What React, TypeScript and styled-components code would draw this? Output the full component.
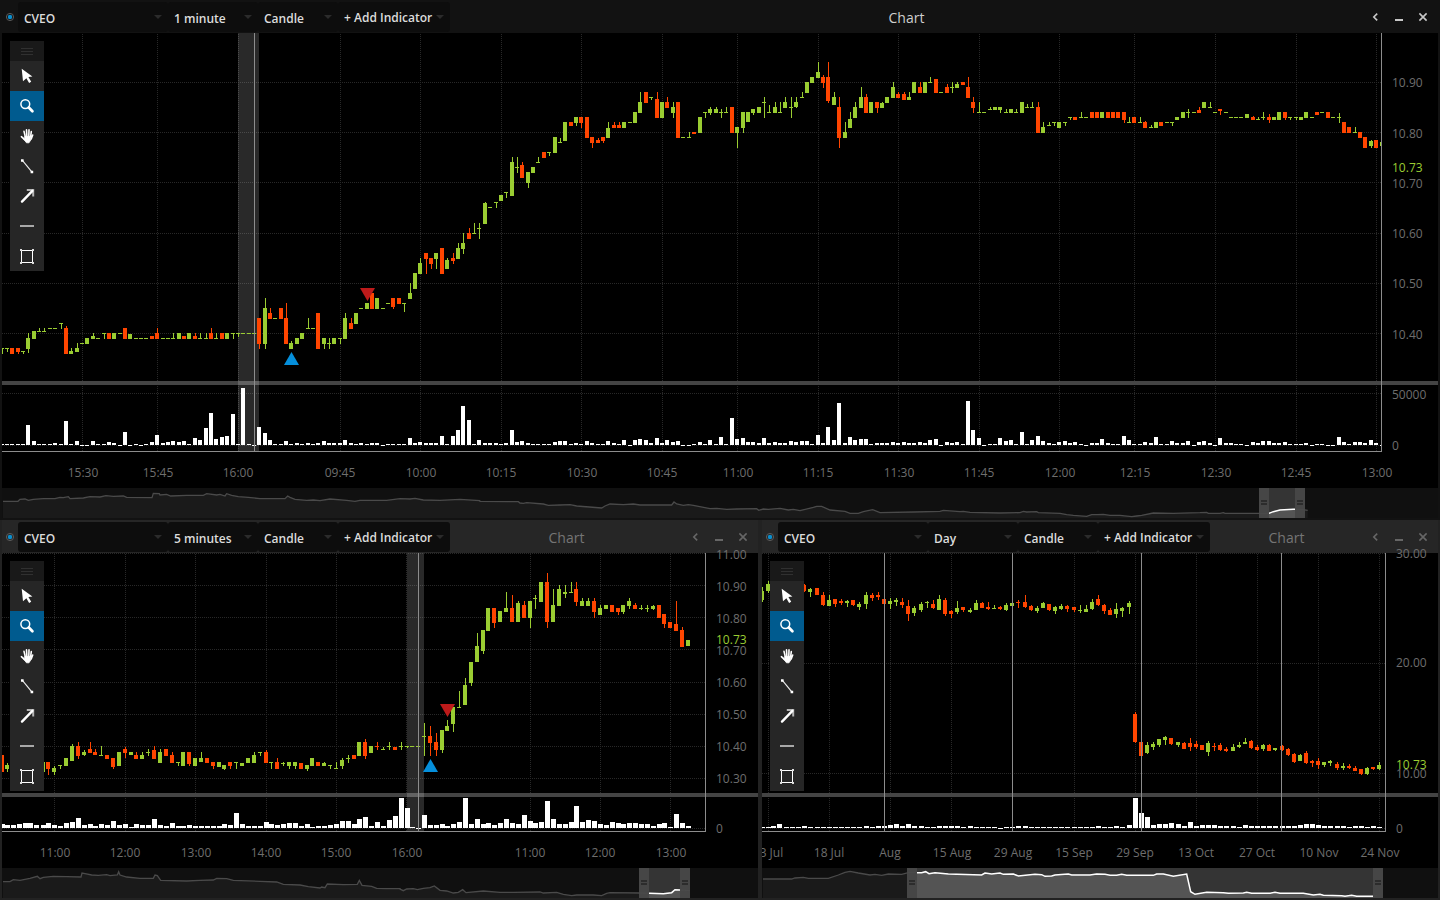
import React from 'react';
import styled, { createGlobalStyle } from 'styled-components';

/* ---------- data ---------- */

type Candle = { x: number; up: boolean; vol: number; top: number; bottom: number; high: number; low: number };
type Point = [number, number];
type Tick = { at: number; label: string; hot?: boolean };

const UNIT = 3;

// Each entry: direction + x, volume, body top, body bottom [, high, low]
const readCandles = (ox: number, oy: number, feed: string): Candle[] =>
  feed
    .trim()
    .split(/\s+/)
    .map((entry) => {
      const n = entry.slice(1).split(',').map(Number);
      const y = (v: number) => oy + Math.round(v / UNIT);
      return {
        x: ox + Math.round(n[0] / UNIT - 2) + 2,
        up: entry[0] === 'u',
        vol: n[1],
        top: y(n[2]),
        bottom: y(n[3]),
        high: y(n[4] ?? n[2]),
        low: y(n[5] ?? n[3]),
      };
    });

const readPoints = (ox: number, oy: number, feed: string): Point[] =>
  feed
    .trim()
    .split(/\s+/)
    .map((p) => {
      const [x, y] = p.split(',').map(Number);
      return [ox + x / UNIT, oy + y / UNIT] as Point;
    });

const minuteCandles = [
  ...readCandles(0, 280, `
    u7,1,204,207,204,221 u21,1,204,207,204,216 d36,1,204,221 d54,1,204,216,204,221 u69,1,213,216,213,221
    u84,20,174,207,159,219 u102,4,153,177 u118,1,153,156,144,156 u133,1,153,156,144,156 u150,1,144,147
    u165,2,144,147 u183,1,129,132,129,147 d198,24,144,221,138,221 u213,1,213,221,204,221 u231,4,204,216,189,216
    u246,0,189,192 u261,0,174,192 u280,4,168,177,159,177 u294,1,174,177 u312,1,159,162,159,177 d327,3,159,177
    u342,2,159,177 u360,0,159,162 d375,13,144,177 u390,0,162,177 u408,1,174,177 u423,0,174,177 u438,1,174,177
    d456,3,168,177 d471,10,159,177,144,177 u489,2,174,177 u504,3,174,177 u519,4,174,177,159,177 u537,3,159,177
    d552,4,168,177 u567,1,159,177 d585,7,168,177,159,177 u601,5,174,177,159,177 u618,17,174,177,159,177
    d633,32,159,177,144,177 u649,6,174,177,159,177 d666,8,159,177 u681,9,159,177 u698,31,159,162,159,177
    u715,1,159,162,159,171 u729,57,159,162 u747,1,159,162 u762,0,159,162 d777,18,114,192,114,207
    u795,12,84,192,54,207 d810,5,99,117,84,117 u825,1,114,117 d843,1,84,117 d858,4,114,192,69,192
    u873,1,189,207,183,207 u891,2,174,192 u906,1,159,177 u925,2,144,147,114,147 u939,1,144,147 d954,2,99,207
    u972,4,174,192,174,207 u988,2,189,192,174,207 u1003,2,174,192 u1020,2,174,177,174,192 u1035,5,114,177,99,177
    d1053,2,129,147,114,147 u1068,1,99,132 u1083,2,84,87 u1101,1,69,87 d1116,2,39,87 u1131,2,54,87
    u1149,0,84,87 u1164,1,69,72 d1179,1,54,81,54,87 d1197,1,54,72 u1213,1,69,72,69,96 u1230,7,39,57,9,57
    u1245,2,-21,27`),
  ...readCandles(0, 0, `
    u1260,3,789,822,774,822 d1278,2,759,777,759,822 d1293,2,774,792,774,807 u1308,2,759,777,759,807 d1326,9,744,822
    u1341,1,780,807,774,807 d1359,9,774,783,759,792 u1374,15,744,777,729,777 u1389,39,729,747,699,762
    d1407,25,699,717,684,717 u1423,1,699,702,669,702 u1438,5,684,687,669,717`),
  ...readCandles(480, 60, `
    u15,2,429,492,426,492 u30,2,441,444 u48,2,426,429,426,444 u63,1,405,423 u78,2,396,399,396,414
    u96,15,306,408,291,408 u111,3,321,324,291,339 d126,4,315,354,306,354 u144,2,336,369,336,384 u159,1,321,339
    u174,1,306,309,291,309 d192,1,276,294 u207,1,276,279,276,288 u225,3,231,279 u240,4,246,249,234,249
    u255,4,186,243 d273,1,186,198 u288,2,171,189,171,198 d303,1,171,189,171,204 d321,4,171,234
    d336,2,231,249,231,264 d354,1,240,249,234,249 d369,1,231,243,231,249 u384,4,204,234,186,234
    d402,2,195,204,186,204 d417,1,195,204,186,204 u432,5,186,204 u450,0,186,189 u465,5,156,189
    u480,6,126,159,96,159 d498,5,96,129 u513,2,111,114,111,120 d531,7,117,174,96,174 u546,2,126,174
    d561,5,126,144,111,144 u579,3,141,159,126,174 d594,4,126,234 u609,0,231,234 u627,0,231,234,216,234
    d642,1,216,222 u660,3,171,219 u675,1,156,159,156,174 u690,5,147,159,141,165 u708,1,147,159,141,159
    u723,8,156,159,147,174 u738,1,156,159,141,159 d756,27,141,219 u771,6,201,219,201,264 u789,7,156,204,156,219
    u804,3,156,186 u819,3,147,159,147,165 u837,2,141,159 u852,7,126,129,111,174 u867,2,156,159,135,159
    u885,3,141,159,126,159 u900,2,156,159,126,159 u915,2,126,144,111,144 u933,4,141,144,111,174
    u948,3,126,141,111,144 u966,4,111,114,96,114 u981,4,66,99 u996,1,51,69 u1014,10,36,54,6,54
    d1029,2,51,69,45,84 d1044,18,51,123,6,129 u1062,5,111,135,96,135 d1077,42,141,234,111,264
    u1095,2,216,234,186,234 u1110,8,177,204,156,204 u1125,5,141,174,126,174 u1143,6,111,144,81,144
    d1158,6,111,159,102,159 u1173,1,126,159 d1191,2,126,144,126,159 u1206,2,129,144,126,144 u1221,2,111,129
    u1239,3,81,114,66,114 d1254,2,102,114,96,114 d1272,3,102,120,96,120 u1287,2,111,120,96,120 u1302,2,66,99
    d1320,3,81,99,66,99 u1335,2,66,99 u1350,5,66,69,51,69 d1368,6,57,99 u1383,0,96,99 d1401,3,81,99,72,99
    u1416,2,81,84,66,99 u1431,3,72,84,66,84`),
  ...readCandles(960, 0, `
    d9,1,246,255 d24,44,261,294,231,294 d39,15,306,324,291,339 u57,7,336,339,306,339 u72,0,336,339
    u90,1,327,330,321,330 u105,1,321,330 u120,7,321,330,321,339 u138,4,336,339,327,339 u153,5,327,339
    u168,1,336,339,327,339 u186,13,306,339 u201,1,321,324,312,324 u216,5,321,324,306,324 d234,9,321,399,306,399
    u249,4,381,399,366,399 u267,2,375,378,366,378 u282,1,366,369,366,378 u297,3,366,384 u315,4,366,369,366,378
    u330,2,351,354,351,360 d345,3,351,360 u363,1,351,354,336,354 u378,0,351,354 d396,2,336,354 d411,2,336,354
    u426,6,336,354 d444,2,336,354 d459,1,336,354 d474,1,336,354 d492,9,336,360,336,369 u507,5,366,369,351,369
    d522,1,351,369 u540,1,366,369,351,369 d555,3,366,384,363,384 u573,2,381,384,375,384 u588,8,366,384
    d603,1,366,378 u621,1,366,369 u636,4,366,369,366,378 u651,2,351,360 u669,2,336,354 u684,4,336,339,327,354
    u702,0,336,339 d717,3,330,339,321,339 u732,4,306,324 u750,2,321,324,306,324 u765,0,336,339
    d780,7,327,333,327,345 u798,2,336,339 u813,2,351,354 u828,1,351,354 u843,1,351,354 u861,0,342,354
    d879,3,351,360,348,360 u894,2,357,360,351,360 u909,4,351,354,336,360 d928,4,351,360,342,369 u942,2,351,360
    u957,2,336,360 d975,3,336,354,336,360 u990,1,351,354,351,360 u1008,1,351,354,351,360 u1023,1,351,360
    u1038,2,336,354 u1056,0,351,354 d1071,1,336,345 u1086,1,336,339 d1104,0,336,354 u1119,0,351,354
    u1137,8,351,354,339,369 d1152,3,366,399 d1167,1,381,399 u1185,3,396,399,381,399 d1200,3,396,414
    d1215,2,411,444 u1233,5,423,438,420,444 d1248,2,420,444 u1266,0,426,438`),
];

const fiveMinuteCandles = [
  ...readCandles(0, 515, `
    d6,4,720,771 u21,3,750,762,744,771 d40,3,744,756 u58,4,741,756 d75,5,741,756 u91,5,741,756 d109,3,744,762
    u128,3,741,771 d144,5,741,762,741,780 u162,3,759,771,753,780 u180,2,750,753,750,762 u198,5,729,753
    u216,6,693,738,687,738 d234,10,693,723,681,732 u252,3,711,720,705,723 d271,4,702,714,681,714
    d285,2,711,720,702,720 u303,4,720,723,693,723 d321,3,720,732 d339,7,729,756,729,762 u357,3,711,753
    d375,4,702,714,696,729 u393,1,711,720 d409,4,720,732,711,732 u426,3,720,732,711,732 u444,3,711,714,702,723
    d462,9,705,732,693,732 u480,3,711,744,702,744 d498,2,702,723 d516,5,720,744,711,744 u535,2,741,744,741,753
    u549,2,711,753 d567,3,711,747,711,753 u585,2,729,753 u603,2,729,741,711,741 d621,2,729,744
    d639,2,741,753,741,762 u657,2,741,756 u673,4,750,762,750,765 d690,3,741,753,741,762 u709,15,741,744,741,762
    u726,4,744,753 u744,2,729,744 u762,2,720,744,711,744 u780,2,711,714,711,723 d798,6,711,744,705,744
    u814,4,741,744,741,762 d831,3,741,762,729,762 u849,4,744,747,741,753 u867,5,741,753,741,762
    u885,5,741,753,741,762 d903,2,744,762 u921,4,750,762,750,768 u936,1,729,753 d954,2,741,753
    u972,2,744,753,741,753 u990,3,750,753,750,762 u1008,4,759,762,741,762 u1026,7,735,753,729,762
    u1045,7,729,732,720,744 d1062,4,720,732 u1077,9,681,723 d1096,11,681,723,672,732 u1113,2,693,714
    d1132,6,693,696,681,705 u1149,2,702,705,696,705 u1167,8,693,696,681,705 d1185,12,696,705`),
  ...readCandles(380, 515, `
    u62,30,693,696,681,705 u80,20,693,696,693,699 u97,1,693,696 u115,0,693,696 u132,13,663,666,624,723
    d151,3,663,684,633,723 d168,3,681,705,654,723 u186,4,645,705,645,714 u202,2,633,648,615,648
    u219,4,576,627,576,651 u237,6,576,579,528,579 u255,30,510,570,489,570 u273,4,441,504,441,513
    u291,9,393,441,354,441 u309,4,345,408,345,417 u324,5,279,348 d342,3,279,324,279,339 u360,5,288,321
    u378,9,279,291,231,291 d396,5,279,321,240,321 u414,4,264,321,258,321 d432,13,270,309,258,309
    u450,7,258,309,258,339 u466,5,249,252,240,282 u483,6,201,261 d501,27,201,321,174,339 u519,9,270,321,222,321
    u537,4,222,273,210,273 u555,4,231,237,210,249 u573,6,231,234,201,234 d588,22,222,261,201,273
    u606,6,258,273,249,273 u624,8,258,273,249,273 d642,7,258,291,249,309 u660,4,279,300,270,300 u678,3,270,282
    d696,6,270,291 d714,5,279,291,279,300 u729,4,270,291,270,297 u747,5,258,273,249,282 d765,5,270,282,264,282
    u783,4,279,282,270,285 u802,4,279,282,270,291 u819,2,273,282,270,285 d837,4,270,309 d852,5,297,327,297,339
    d870,1,321,339 d888,14,327,348,258,348 d906,5,345,396,336,396 u924,2,375,393`),
];

const dailyCandles = [
  ...readCandles(755, 515, `
    u22,1,228,255,216,261 u39,1,207,228,198,234 u55,2,200,225 d73,4,198,222 u93,1,198,225 d111,1,195,219
    u129,1,204,222 d148,2,210,228,207,231 u165,1,222,231,219,246 d186,1,219,240 d204,1,240,270,231,273
    u222,1,255,273,240,273 d240,1,252,267,252,276 d258,1,258,264,252,270 u277,1,258,264,255,276
    d294,1,255,270,255,273 u312,1,267,276,261,285 u333,2,240,267,231,282 d351,1,240,249,234,258
    d369,2,240,246,231,255 d387,2,252,267,252,282 u405,3,258,267,249,282 u424,4,255,261,249,273
    d441,2,261,270,249,279 d460,4,273,297,255,318 u477,2,279,294,273,303 u498,2,267,285,261,291
    u516,1,261,264,258,279 d534,1,267,279,255,282 u552,2,252,285,240,285 d570,2,255,297,249,303
    d588,2,288,297,285,309 u606,2,279,291,258,297 d624,1,276,285,276,291 u645,2,285,291,279,294
    u663,1,264,285,255,285 d681,1,264,279,261,279 d699,1,276,282,261,285 u717,1,279,282,270,282
    d736,0,276,282,273,285 u753,1,270,285,264,288 u771,1,264,273,255,282 d790,2,261,264,255,279
    d810,2,261,276,240,279 d828,1,273,285,270,288 u846,1,279,288,273,294 u864,1,264,279,261,279
    d882,1,267,285,267,288 u900,1,276,288,273,297 u919,1,273,282,267,285 d936,1,273,282,270,291
    d957,1,276,285,276,291 u975,1,285,288,270,294 u993,1,282,291,270,291 u1011,1,261,282,252,285
    d1029,2,252,270,240,273 d1047,1,270,288,267,297`),
  ...readCandles(1090, 515, `
    d60,1,285,300,279,300 u78,2,282,297,264,309 u96,1,279,288,276,306 u117,3,264,276,258,297
    d134,30,597,681,591,684 d153,15,681,723,666,723 u171,11,690,714,681,717 u189,3,687,696,681,705
    u207,4,672,690,672,696 u225,4,666,675,663,690 d243,5,669,687,669,690 u264,4,681,690,681,696
    d282,2,684,702,681,702 d300,6,684,696,669,708 d319,2,687,696,678,702 d336,3,690,705 u354,3,684,711,678,723
    d373,3,693,696,684,708 d390,2,690,705,684,708 d408,2,702,708,696,711 u429,2,696,708,687,708
    u447,1,690,696,681,699 u465,3,681,687,669,687 d483,2,678,699,675,702 d501,2,696,705,690,708
    u519,2,690,702,687,708 d537,2,690,708,687,708 u555,2,699,705,699,708 d576,2,693,705,690,708
    d594,2,702,720,699,723 d612,2,717,741,714,744 u630,3,720,738,717,738 d648,4,714,744,708,747
    d666,4,738,744,735,756 d684,3,738,750,729,762 u702,2,741,750,741,756 u720,2,738,744,735,753
    d741,2,747,759,741,765 u760,2,753,759,744,765 d777,1,753,759,747,762 d795,2,759,768,753,768
    d813,2,762,777,762,780 u831,1,759,777,756,780 d849,2,756,762,756,765 u867,1,750,762,741,765`),
];

const minuteHistory = [
  ...readPoints(0, 280, `9,664 54,664 60,658 75,657 85,661 100,658 130,656 165,656 180,652 190,653 205,650 210,656 250,654
    270,650 300,651 318,647 340,649 370,648 380,652 456,653 460,640 478,641 480,645 500,643 512,648 560,646 610,646
    620,641 650,645 660,643 675,648 680,641 695,646 715,650 745,652 780,656 855,656 863,648 870,652 885,658 920,661
    940,660 960,662 990,657 1040,661 1065,664 1080,661 1160,661 1200,656 1230,657 1245,655 1270,660 1320,661
    1380,658 1439,662`),
  ...readPoints(480, 370, `0,394 115,395 120,399 130,400 140,398 190,402 205,406 240,405 270,404 290,408 365,414 375,408 390,402
    430,404 460,402 480,405 575,405 582,396 590,402 610,406 625,404 640,406 690,416 710,415 740,418 770,417 830,416
    836,421 850,417 865,418 900,415 925,420 940,418 960,422 1000,412 1010,409 1025,409 1050,420 1095,424 1110,430
    1135,430 1150,425 1178,419 1200,428 1300,426 1380,424 1390,421 1440,425`),
  ...readPoints(960, 370, `10,424 30,427 120,429 180,428 190,424 200,426 230,425 235,428 300,430 320,434 340,436 380,439 395,434
    410,434 430,433 450,436 480,436 515,440 530,438 545,436 580,429 640,430 720,428 740,427 745,430 780,430 790,428
    795,430 897,430 927,430 940,425 960,420 1000,418 1025,418 1043,421`),
];

const fiveMinuteHistory = [
  ...readPoints(0, 515, `9,1100 30,1100 40,1094 60,1096 90,1090 112,1084 120,1091 130,1087 160,1084 200,1085 243,1086 246,1074
    255,1076 275,1080 295,1081 320,1079 330,1082 352,1080 356,1070 360,1080 380,1086 420,1090 460,1090 465,1080
    472,1082 482,1096 560,1098 600,1096 640,1095 650,1090 680,1091 700,1096 780,1099 830,1101 850,1108 900,1110
    925,1115 960,1119 965,1116 975,1118 982,1107 1030,1109 1072,1108 1078,1096 1086,1111 1115,1114 1130,1120 1160,1121
    1200,1121`),
  ...readPoints(380, 515, `60,1122 70,1127 80,1122 100,1121 112,1124 130,1120 150,1118 163,1113 180,1126 200,1128 220,1134 235,1132
    248,1124 258,1133 310,1128 360,1132 400,1132 480,1131 490,1134 530,1132 550,1138 575,1142 590,1140 640,1140
    665,1142 680,1135 690,1133 780,1134 850,1136 875,1133 885,1124 930,1127`),
];

const dailyHistory = [
  ...readPoints(755, 515, `24,1092 110,1092 120,1089 145,1087 160,1090 220,1090 250,1080 270,1072 285,1069 310,1074 345,1080
    360,1078 380,1081 400,1077 440,1078 460,1073 500,1073 512,1070 522,1076 540,1073 580,1077 680,1080 690,1074
    710,1077 735,1074 745,1078 775,1077 790,1083 840,1078 860,1079 870,1084 890,1083 900,1080 940,1077 950,1080
    1005,1080 1025,1077`),
  ...readPoints(1090, 515, `45,1078 60,1081 80,1081 95,1078 110,1081 190,1081 200,1077 220,1077 250,1084 290,1077 302,1130 315,1138
    350,1132 400,1133 415,1135 460,1134 470,1132 485,1135 540,1135 555,1132 570,1135 640,1135 670,1140 690,1138
    700,1141 755,1142 765,1144 785,1141 800,1144 850,1144 862,1140`),
];

interface ChartSpec {
  id: string;
  active: boolean;
  interval: string;
  // plot origin, size, and the lines inside it, in chart space
  left: number;
  top: number;
  width: number;
  height: number;
  axisWidth: number;
  split: number;
  base: number;
  barWidth: number;
  candles: Candle[];
  columns: number[];
  rows: number[];
  sessions: number[];
  closed?: [number, number];
  buy?: Point;
  sell?: Point;
  prices: Tick[];
  times: Tick[];
  history: Point[];
  overviewTop: number;
  overviewWidth: number;
  range: [number, number];
}

const ticks = (text: string): Tick[] =>
  text.split('|').map((t) => {
    const [at, label, hot] = t.split('=');
    return { at: Number(at), label, hot: hot === 'hot' };
  });

const charts: ChartSpec[] = [
  {
    id: 'minute', active: true, interval: '1 minute',
    left: 2, top: 33, width: 1380, height: 419, axisWidth: 56, split: 381, base: 445, barWidth: 4,
    candles: minuteCandles,
    columns: [82, 157, 238, 340, 420, 501, 581, 662, 737, 818, 898, 979, 1059, 1134, 1215, 1296, 1376],
    rows: [82, 132, 182, 233, 283, 333, 393, 445],
    sessions: [254], closed: [238, 259], buy: [291, 352], sell: [367, 301],
    prices: ticks('82=10.90|133=10.80|167=10.73=hot|183=10.70|233=10.60|283=10.50|334=10.40|394=50000|445=0'),
    times: ticks('83=15:30|158=15:45|238=16:00|340=09:45|421=10:00|501=10:15|582=10:30|662=10:45|738=11:00|818=11:15|899=11:30|979=11:45|1060=12:00|1135=12:15|1216=12:30|1296=12:45|1377=13:00'),
    history: minuteHistory, overviewTop: 488, overviewWidth: 1436, range: [1259, 1305],
  },
  {
    id: 'five', active: false, interval: '5 minutes',
    left: 2, top: 553, width: 704, height: 279, axisWidth: 52, split: 793, base: 828, barWidth: 5,
    candles: fiveMinuteCandles,
    columns: [54, 125, 195, 266, 336, 406, 530, 600, 670],
    rows: [553, 585, 617, 649, 682, 714, 746, 778, 828],
    sessions: [418], closed: [407, 424], buy: [430, 759], sell: [447, 717],
    prices: ticks('554=11.00|586=10.90|618=10.80|639=10.73=hot|650=10.70|682=10.60|714=10.50|746=10.40|778=10.30|828=0'),
    times: ticks('55=11:00|125=12:00|196=13:00|266=14:00|336=15:00|407=16:00|530=11:00|600=12:00|671=13:00'),
    history: fiveMinuteHistory, overviewTop: 868, overviewWidth: 756, range: [639, 690],
  },
  {
    id: 'daily', active: false, interval: 'Day',
    left: 762, top: 553, width: 624, height: 279, axisWidth: 52, split: 793, base: 828, barWidth: 5,
    candles: dailyCandles,
    columns: [768, 829, 890, 951, 1074, 1135, 1196, 1257, 1318, 1379],
    rows: [553, 663, 773, 828],
    sessions: [884, 1012, 1141, 1281],
    prices: ticks('553=30.00|663=20.00|764=10.73=hot|773=10.00|828=0'),
    times: ticks('768=03 Jul|829=18 Jul|890=Aug|952=15 Aug|1013=29 Aug|1074=15 Sep|1135=29 Sep|1196=13 Oct|1257=27 Oct|1319=10 Nov|1380=24 Nov'),
    history: dailyHistory, overviewTop: 868, overviewWidth: 676, range: [907, 1383],
  },
];

/* ---------- styles ---------- */

const FONT = "'Open Sans', 'Noto Sans', sans-serif";

const GlobalStyle = createGlobalStyle`
  *, *::before, *::after { box-sizing: border-box; }
  body { margin: 0; background: #161616; font-family: ${FONT}; }
  button, select { font: inherit; color: inherit; border: 0; margin: 0; padding: 0; background: none; }
`;

const Desk = styled.main`
  display: grid;
  grid-template-rows: 26fr 19fr;
  min-height: 100vh;
`;

const LowerRow = styled.div`
  display: grid;
  grid-template-columns: 19fr 17fr;
`;

const Frame = styled.section<{ $active: boolean }>`
  display: flex;
  flex-direction: column;
  min-width: 0;
  overflow: hidden;
  border: 2px solid ${(p) => (p.$active ? '#121212' : '#222222')};
  border-top: 0;
`;

const Header = styled.header<{ $active: boolean }>`
  display: flex;
  height: 33px;
  padding: 2px 3px 1px 0;
  background: ${(p) => (p.$active ? '#121212' : '#262626')};
`;

const LinkButton = styled.button`
  display: grid;
  place-items: center;
  width: 16px;
`;

const ControlGroup = styled.div`
  display: flex;
  color: #dcdcdc;
  font-size: 12px;
  font-weight: 600;
`;

const Picker = styled.label<{ $width: number }>`
  display: grid;
  grid-template: 30px / 1fr;
  align-items: center;
  width: ${(p) => p.$width}px;
  border-radius: 3px;
  background: #0d0d0d;

  > * { grid-area: 1 / 1; }
`;

const PickerSelect = styled.select`
  appearance: none;
  width: 100%;
  height: 30px;
  padding: 2px 20px 0 6px;
  outline: 0;
`;

const AddButton = styled.button`
  display: flex;
  align-items: center;
  justify-content: space-between;
  width: 112px;
  padding: 0 6px;
  border-radius: 3px;
  background: #0d0d0d;
  line-height: 16px;
  white-space: nowrap;
`;

const AddText = styled.span`
  padding-top: 2px;
`;

const CaretIcon = styled.svg`
  justify-self: end;
  flex: none;
  width: 8px;
  height: 4px;
  margin-right: 6px;
  fill: #2b2b2b;
  pointer-events: none;

  ${AddButton} & { margin-right: 0; }
`;

const Title = styled.h2<{ $active: boolean }>`
  flex: 1;
  margin: 0;
  color: ${(p) => (p.$active ? '#cfcfcf' : '#757575')};
  font-size: 14px;
  font-weight: 400;
  line-height: 32px;
  text-align: center;
`;

const WindowButton = styled.button<{ $active: boolean }>`
  display: grid;
  place-items: center;
  width: 24px;
  color: ${(p) => (p.$active ? '#c8c8c8' : '#666666')};
`;

const Body = styled.div<{ $axis: number }>`
  position: relative;
  display: grid;
  flex: 1;
  grid-template: minmax(0, 1fr) 36px / minmax(0, 1fr) ${(p) => p.$axis}px;
  background: #000;
`;

const Plot = styled.svg`
  display: block;
  width: 100%;
  height: 100%;
  min-height: 0;
`;

const Axis = styled.svg`
  display: block;
  width: 100%;
  height: 100%;
  overflow: visible;
  fill: #6e6e6e;
  font-size: 12px;
`;

const Palette = styled.div`
  position: absolute;
  top: 8px;
  left: 8px;
  display: flex;
  flex-direction: column;
  width: 34px;
  background: #262626;
`;

const Grip = styled.div`
  display: grid;
  place-items: center;
  height: 20px;
  background: #191919;
`;

const Tool = styled.button<{ $on: boolean }>`
  height: 30px;
  background: ${(p) => (p.$on ? '#005b8f' : 'transparent')};

  svg { display: block; }
`;

const Overview = styled.div`
  height: 30px;
  background: #101010;
`;

/* ---------- pieces ---------- */

const UP = '#9acd32';
const DOWN = '#ff4500';

const Caret = () => (
  <CaretIcon viewBox="0 0 8 4" aria-hidden="true">
    <path d="M0 0h8L4 4z" />
  </CaretIcon>
);

const toolIcons: [string, React.ReactNode][] = [
  ['Select', <path key="i" fill="#fff" d="M11.7 7.8 22.4 15.6l-4 .5 2.8 4.6-2.1 1.3-2.7-4.7-3.4 3z" />],
  ['Zoom', (
    <g key="i" fill="none" stroke="#fff">
      <circle cx="15.3" cy="13.1" r="4.4" strokeWidth="1.5" />
      <path d="M18.8 16.6l3.6 3.6" strokeWidth="2.8" strokeLinecap="round" />
    </g>
  )],
  ['Pan', (
    <g key="i" stroke="#fff" strokeLinecap="round" fill="#fff">
      <path d="M14 10.4l1.3 5.4M16.5 8.9l.4 6.5M19 8.9l-.2 6.5M21.3 10.6l-.7 5.2M22.7 14l-1.5 4M11.4 15.7l3.2 3" strokeWidth="1.6" />
      <path d="M15 15.5h5.8l-.2 3.7-1.6 2.6h-2.5L14 18.5z" strokeWidth=".8" strokeLinejoin="round" />
    </g>
  )],
  ['Line', (
    <g key="i" stroke="#eee" fill="#fff">
      <path d="M12.4 9.4l9.6 11.7" strokeWidth="1.1" />
      <path stroke="none" d="M11 8.3h2.6v2.4H11zM20.6 19.8h2.6v2.4h-2.6z" />
    </g>
  )],
  ['Arrow', (
    <g key="i" fill="none" stroke="#fff">
      <path d="M16.8 9h6.4v6.6" stroke="#b4b4b4" strokeWidth="2" />
      <path d="M12 20.6L22.4 9.8" strokeWidth="2.4" strokeLinecap="round" />
    </g>
  )],
  ['Horizontal line', <path key="i" fill="#a8a8a8" d="M10 14h14v2H10z" />],
  ['Rectangle', (
    <g key="i" shapeRendering="crispEdges">
      <rect x="11.5" y="9.5" width="11" height="12" fill="none" stroke="#fff" />
      <path fill="#ddd" d="M10 8h2v2h-2zM22 8h2v2h-2zM10 21h2v2h-2zM22 21h2v2h-2z" />
    </g>
  )],
];

const Toolbox = () => (
  <Palette role="toolbar" aria-label="Drawing tools">
    <Grip>
      <svg width="12" height="9" shapeRendering="crispEdges" aria-hidden="true">
        <path d="M0 1h12M0 4h12M0 7h12" transform="translate(0 .5)" stroke="#303030" />
      </svg>
    </Grip>
    {toolIcons.map(([name, art]) => (
      <Tool key={name} type="button" aria-label={name} $on={name === 'Zoom'}>
        <svg width="34" height="30" viewBox="0 0 34 30" aria-hidden="true">{art}</svg>
      </Tool>
    ))}
  </Palette>
);

const ChartPlot = ({ c }: { c: ChartSpec }) => {
  const right = c.left + c.width;
  const bottom = c.top + c.height;
  return (
    <Plot viewBox={`${c.left} ${c.top} ${c.width} ${c.height}`} preserveAspectRatio="none" shapeRendering="crispEdges" role="img" aria-label="Price and volume">
      <g stroke="#282828" strokeDasharray="1 1">
        {c.columns.map((x) => <path key={x} d={`M${x + 0.5} ${c.top + 1}V${bottom}`} />)}
        {c.rows.map((y) => <path key={y} d={`M${c.left} ${y + 0.5}H${right}`} />)}
      </g>
      <rect x={c.left} y={c.split} width={c.width} height="4" fill="#444" />
      {c.closed && <rect x={c.closed[0]} y={c.top} width={c.closed[1] - c.closed[0]} height={c.height} fill="#fff" fillOpacity=".16" />}
      {c.candles.map((k) => (
        <g key={k.x} fill={k.up ? UP : DOWN}>
          <rect x={k.x} y={k.high} width="1" height={k.low - k.high} />
          <rect x={k.x - 2} y={k.top} width="4" height={k.bottom - k.top} />
          <rect x={k.x - 2} y={c.base - k.vol} width={c.barWidth} height={k.vol || 1} fill="#fff" />
        </g>
      ))}
      {c.sessions.map((x) => <rect key={x} x={x} y={c.top} width="1" height={c.height} fill="#8c8c8c" />)}
      <path d={`M${c.left} ${bottom - 0.5}H${right - 0.5}V${c.top}`} fill="none" stroke="#8c8c8c" />
      <g shapeRendering="auto">
        {c.buy && <path fill="#058fdb" d={`M${c.buy[0] - 7} ${c.buy[1] + 13}h15l-7.5 -13z`} />}
        {c.sell && <path fill="#bd1a1a" d={`M${c.sell[0] - 7} ${c.sell[1] - 13}h15l-7.5 13z`} />}
      </g>
    </Plot>
  );
};

const OverviewStrip = ({ c }: { c: ChartSpec }) => {
  const floor = c.overviewTop + 30;
  const [from, to] = c.range;
  const line = c.history.map((p) => p.join(',')).join(' ');
  const first = c.history[0][0];
  const last = c.history[c.history.length - 1][0];
  const area = `${first},${floor} ${line} ${last},${floor}`;
  const clip = `range-${c.id}`;
  const handleMark = (x: number) => `M${x + 2} ${c.overviewTop + 12}h6v2h-6zM${x + 2} ${c.overviewTop + 15}h6v2h-6z`;
  return (
    <Overview>
      <Plot viewBox={`${c.left} ${c.overviewTop} ${c.overviewWidth} 30`} preserveAspectRatio="none" role="img" aria-label="Price history">
        <clipPath id={clip}>
          <rect x={from + 10} y={c.overviewTop} width={to - from - 20} height="30" />
        </clipPath>
        <polygon points={area} fill="#1a1a1a" />
        <rect x={from} y={c.overviewTop} width={to - from} height="30" fill="#343434" />
        <polygon points={area} fill="#545454" clipPath={`url(#${clip})`} />
        <g fill="#464646">
          <rect x={from} y={c.overviewTop} width="10" height="30" />
          <rect x={to - 10} y={c.overviewTop} width="10" height="30" />
        </g>
        <polyline points={line} fill="none" stroke="#4a4a4a" strokeWidth="1.3" />
        <polyline points={line} fill="none" stroke="#fff" strokeWidth="1.5" clipPath={`url(#${clip})`} />
        <path d={handleMark(from) + handleMark(to - 10)} fill="#2c2c2c" shapeRendering="crispEdges" />
      </Plot>
    </Overview>
  );
};

const ChartWindow = ({ c }: { c: ChartSpec }) => {
  const px = (x: number) => `${((x - c.left) / c.width) * 100}%`;
  const py = (y: number) => `${((y - c.top) / c.height) * 100}%`;
  return (
    <Frame $active={c.active} aria-label={`${c.interval} chart`}>
      <Header $active={c.active}>
        <LinkButton type="button" aria-label="Link colour">
          <svg width="10" height="10" viewBox="0 0 10 10" aria-hidden="true">
            <circle cx="5" cy="5" r="3.6" fill="none" stroke="#5a5a5a" />
            <circle cx="5" cy="5" r="2.2" fill="#0a8fcf" />
          </svg>
        </LinkButton>
        <ControlGroup>
          <Picker $width={150}>
            <PickerSelect aria-label="Symbol"><option>CVEO</option></PickerSelect>
            <Caret />
          </Picker>
          <Picker $width={90}>
            <PickerSelect aria-label="Interval"><option>{c.interval}</option></PickerSelect>
            <Caret />
          </Picker>
          <Picker $width={80}>
            <PickerSelect aria-label="Chart type"><option>Candle</option></PickerSelect>
            <Caret />
          </Picker>
          <AddButton type="button"><AddText>+ Add Indicator</AddText><Caret /></AddButton>
        </ControlGroup>
        <Title $active={c.active}>Chart</Title>
        <WindowButton type="button" aria-label="Collapse" $active={c.active}>
          <svg width="10" height="10" fill="none" stroke="currentColor" strokeWidth="1.6"><path d="M7.2 1.6L3.8 5l3.4 3.4" /></svg>
        </WindowButton>
        <WindowButton type="button" aria-label="Minimise" $active={c.active}>
          <svg width="10" height="10" fill="currentColor"><path d="M1 7h8v2H1z" /></svg>
        </WindowButton>
        <WindowButton type="button" aria-label="Close" $active={c.active}>
          <svg width="10" height="10" fill="none" stroke="currentColor" strokeWidth="1.6"><path d="M1.4 1.4l7.2 7.2M8.6 1.4L1.4 8.6" /></svg>
        </WindowButton>
      </Header>
      <Body $axis={c.axisWidth}>
        <ChartPlot c={c} />
        <Axis>
          <rect y={py(c.split)} width="100%" height="4" fill="#444" shapeRendering="crispEdges" />
          {c.prices.map((t) => (
            <text key={t.label} x="10" y={py(t.at)} dominantBaseline="central" fill={t.hot ? UP : undefined}>{t.label}</text>
          ))}
        </Axis>
        <Axis>
          {c.times.map((t) => (
            <text key={t.at} x={px(t.at)} y="20" textAnchor="middle" dominantBaseline="central">{t.label}</text>
          ))}
        </Axis>
        <Toolbox />
      </Body>
      <OverviewStrip c={c} />
    </Frame>
  );
};

export default function App() {
  return (
    <>
      <GlobalStyle />
      <Desk>
        <ChartWindow c={charts[0]} />
        <LowerRow>
          <ChartWindow c={charts[1]} />
          <ChartWindow c={charts[2]} />
        </LowerRow>
      </Desk>
    </>
  );
}
